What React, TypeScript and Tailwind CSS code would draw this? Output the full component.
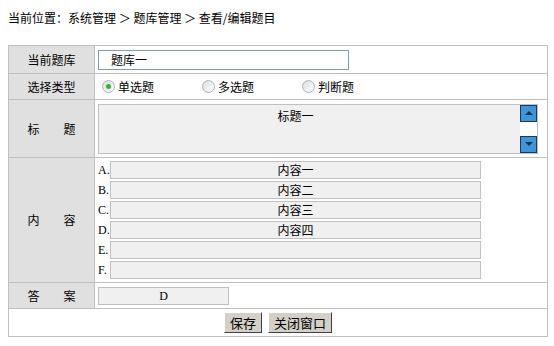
import React from "react";

const cjk = { fontFamily: '"Noto Sans CJK SC", "Noto Sans", sans-serif' };

function Radio({ checked, label }: { checked?: boolean; label: string }) {
  return (
    <label className="flex items-center gap-[3px]">
      <span className="w-[13px] h-[13px] rounded-full border border-[#a9b3bd] bg-gradient-to-br from-[#dcdcdc] to-white flex items-center justify-center">
        {checked && <span className="w-[5px] h-[5px] rounded-full bg-[#2fb52f]" />}
      </span>
      <span>{label}</span>
    </label>
  );
}

function ScrollBtn({ up }: { up?: boolean }) {
  return (
    <div className="w-[17px] h-[17px] bg-[#3d95dc] border border-[#1b3a52] flex items-center justify-center">
      <div
        className={
          up
            ? "w-0 h-0 border-l-[4px] border-r-[4px] border-b-[4px] border-l-transparent border-r-transparent border-b-[#0f3552]"
            : "w-0 h-0 border-l-[4px] border-r-[4px] border-t-[4px] border-l-transparent border-r-transparent border-t-[#0f3552]"
        }
      />
    </div>
  );
}

function Btn({ children }: { children: React.ReactNode }) {
  return (
    <button className="h-[21px] px-[5px] bg-[#d4d0c8] border border-t-white border-l-white border-r-[#404040] border-b-[#404040] text-[13px] leading-none text-black">
      {children}
    </button>
  );
}

export default function App() {
  const options = ["内容一", "内容二", "内容三", "内容四", "", ""];
  const letters = ["A", "B", "C", "D", "E", "F"];
  const label = "bg-[#e0e0e0] border border-[#c0c0c0] text-center w-[86px] p-0";
  const cell = "border border-[#c0c0c0] p-0";

  return (
    <div className="w-[554px] h-[346px] bg-white text-[12px] text-black" style={cjk}>
      <div className="h-[45px] pl-[8px] pt-[9px] text-[12px]">
        当前位置：系统管理 ＞ 题库管理 ＞ 查看/编辑题目
      </div>
      <table className="ml-[8px] w-[540px] border-collapse border border-[#c0c0c0]">
        <tbody>
          <tr className="h-[28px]">
            <td className={label}>当前题库</td>
            <td className={cell}>
              <div className="ml-[3px] w-[251px] h-[20px] border border-[#7f9db9] flex items-center pl-[12px]">
                题库一
              </div>
            </td>
          </tr>
          <tr className="h-[26px]">
            <td className={label}>选择类型</td>
            <td className={cell}>
              <div className="flex items-center pl-[7px]">
                <div className="w-[100px]"><Radio checked label="单选题" /></div>
                <div className="w-[100px]"><Radio label="多选题" /></div>
                <Radio label="判断题" />
              </div>
            </td>
          </tr>
          <tr className="h-[58px]">
            <td className={label}>标　　题</td>
            <td className={cell}>
              <div className="ml-[3px] w-[440px] h-[50px] border border-[#c0c0c0] bg-[#f0f0f0] flex">
                <div className="flex-1 text-center pt-[2px] pr-[28px]">标题一</div>
                <div className="w-[17px] bg-white flex flex-col justify-between">
                  <ScrollBtn up />
                  <ScrollBtn />
                </div>
              </div>
            </td>
          </tr>
          <tr className="h-[125px]">
            <td className={label}>内　　容</td>
            <td className={cell}>
              <div className="flex flex-col gap-[2px] pl-[3px] py-[3px]">
                {options.map((o, i) => (
                  <div key={i} className="flex items-center h-[18px]">
                    <span
                      className="w-[12px] text-[12px]"
                      style={{ fontFamily: '"Liberation Serif", serif' }}
                    >
                      {letters[i]}.
                    </span>
                    <div className="w-[371px] h-[18px] border border-[#c0c0c0] bg-[#f0f0f0] text-center leading-[16px]">
                      {o}
                    </div>
                  </div>
                ))}
              </div>
            </td>
          </tr>
          <tr className="h-[26px]">
            <td className={label}>答　　案</td>
            <td className={cell}>
              <div
                className="ml-[3px] w-[131px] h-[18px] border border-[#c0c0c0] bg-[#f0f0f0] text-center leading-[16px]"
                style={{ fontFamily: '"Liberation Serif", serif' }}
              >
                D
              </div>
            </td>
          </tr>
          <tr className="h-[28px]">
            <td colSpan={2} className={cell}>
              <div className="flex justify-center gap-[6px]">
                <Btn>保存</Btn>
                <Btn>关闭窗口</Btn>
              </div>
            </td>
          </tr>
        </tbody>
      </table>
    </div>
  );
}
